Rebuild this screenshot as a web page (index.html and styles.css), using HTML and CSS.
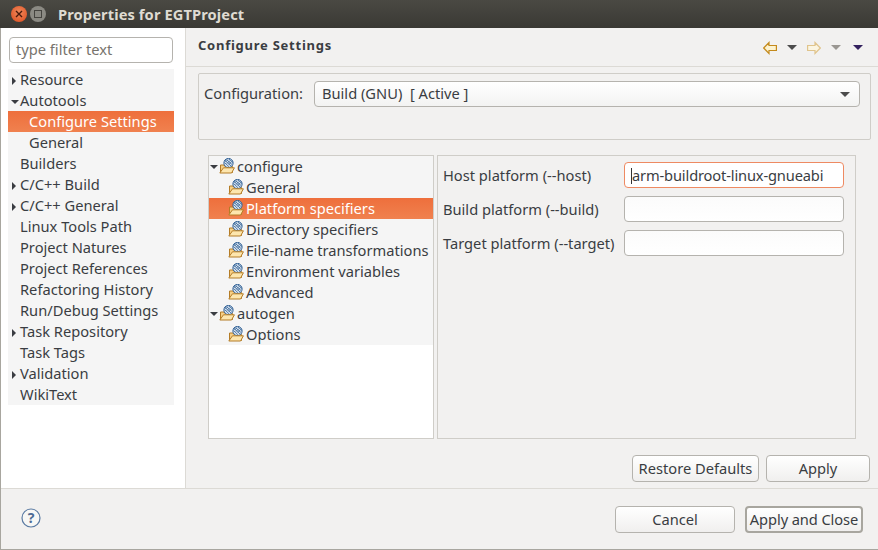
FILE: index.html
```html
<!DOCTYPE html>
<html lang="en">
<head>
    <meta charset="UTF-8">
    <title>Properties for EGTProject</title>
    <link rel="stylesheet" href="styles.css">
</head>
<body>
    <svg class="defs" width="0" height="0">
        <symbol id="folder" viewBox="0 0 18 18">
            <path d="M1.5 14.5 L1.5 7 L5 7 L6 8.5 L13.5 8.5 L13.5 14.5 Z" fill="#f6cf86" stroke="#b47c26"/>
            <circle cx="9.5" cy="5" r="4.6" fill="#dfe8f2" stroke="#2f5f94"/>
            <path d="M6 2.5 L12 8 M7.5 1.5 L13 6.5 M5.5 4.5 L10 8.8 M10 1 L14 4.5 M7 1 L5.5 3 M9 1.5 L6.5 4 M11 2.5 L8 5.5 M12.5 3.5 L10 6.5" stroke="#2f5f94" stroke-width="0.8"/>
            <path d="M0.8 15 L4.5 9.8 L15.4 9.8 L12.6 15 Z" fill="#fde6ae" stroke="#b47c26" stroke-linejoin="round"/>
        </symbol>
    </svg>
    <div class="window">
        <div class="titlebar">
            <span class="win-btn close"><svg width="8" height="8" viewBox="0 0 8 8"><path d="M1 1 L7 7 M7 1 L1 7" stroke="#4a1a0c" stroke-width="1.4"/></svg></span>
            <span class="win-btn maxi"><span class="maxi-box"></span></span>
            <span class="title">Properties for EGTProject</span>
        </div>

        <div class="body">
            <div class="sidebar">
                <div class="filter">type filter text</div>
                <ul class="nav-tree">
                    <li><i class="tw closed"></i>Resource</li>
                    <li><i class="tw open"></i>Autotools</li>
                    <li class="sub selected">Configure Settings</li>
                    <li class="sub">General</li>
                    <li><i class="tw"></i>Builders</li>
                    <li><i class="tw closed"></i>C/C++ Build</li>
                    <li><i class="tw closed"></i>C/C++ General</li>
                    <li><i class="tw"></i>Linux Tools Path</li>
                    <li><i class="tw"></i>Project Natures</li>
                    <li><i class="tw"></i>Project References</li>
                    <li><i class="tw"></i>Refactoring History</li>
                    <li><i class="tw"></i>Run/Debug Settings</li>
                    <li><i class="tw closed"></i>Task Repository</li>
                    <li><i class="tw"></i>Task Tags</li>
                    <li><i class="tw closed"></i>Validation</li>
                    <li><i class="tw"></i>WikiText</li>
                </ul>
            </div>

            <div class="page">
                <div class="page-head">
                    <h1>Configure Settings</h1>
                    <div class="nav-arrows">
                        <svg width="14" height="14" viewBox="0 0 14 14"><path d="M0.7 7 L6 1.5 L6 4.5 L13.4 4.5 L13.4 9.5 L6 9.5 L6 12.5 Z" fill="#fdf3cf" stroke="#c48a1c" stroke-width="1.2"/></svg>
                        <i class="drop dark"></i>
                        <svg width="14" height="14" viewBox="0 0 14 14"><path d="M13.3 7 L8 1.5 L8 4.5 L0.6 4.5 L0.6 9.5 L8 9.5 L8 12.5 Z" fill="#fbf5e2" stroke="#e0c48c" stroke-width="1.2"/></svg>
                        <i class="drop grey"></i>
                        <i class="drop purple"></i>
                    </div>
                </div>

                <div class="config-group">
                    <span class="config-label">Configuration:</span>
                    <div class="combo">
                        <span>Build (GNU)&nbsp; [ Active ]</span>
                        <i class="drop dark"></i>
                    </div>
                </div>

                <div class="panes">
                    <ul class="tool-tree">
                        <li><i class="tw open"></i><svg class="ico"><use href="#folder"/></svg>configure</li>
                        <li class="child"><svg class="ico"><use href="#folder"/></svg>General</li>
                        <li class="child selected"><svg class="ico"><use href="#folder"/></svg>Platform specifiers</li>
                        <li class="child"><svg class="ico"><use href="#folder"/></svg>Directory specifiers</li>
                        <li class="child"><svg class="ico"><use href="#folder"/></svg>File-name transformations</li>
                        <li class="child"><svg class="ico"><use href="#folder"/></svg>Environment variables</li>
                        <li class="child"><svg class="ico"><use href="#folder"/></svg>Advanced</li>
                        <li><i class="tw open"></i><svg class="ico"><use href="#folder"/></svg>autogen</li>
                        <li class="child"><svg class="ico"><use href="#folder"/></svg>Options</li>
                    </ul>
                    <div class="form">
                        <label>Host platform (--host)</label>
                        <div class="field focused"><span class="caret"></span>arm-buildroot-linux-gnueabi</div>
                        <label>Build platform (--build)</label>
                        <div class="field"></div>
                        <label>Target platform (--target)</label>
                        <div class="field"></div>
                    </div>
                </div>

                <div class="page-buttons">
                    <button class="btn restore">Restore Defaults</button>
                    <button class="btn apply">Apply</button>
                </div>
            </div>
        </div>

        <div class="footer">
            <svg class="help" width="20" height="20" viewBox="0 0 20 20">
                <circle cx="10" cy="10" r="9" fill="#f7f7f5" stroke="#5b7ba3" stroke-width="1.2"/>
                <text x="10" y="15" text-anchor="middle" class="help-mark">?</text>
            </svg>
            <div class="footer-buttons">
                <button class="btn cancel">Cancel</button>
                <button class="btn default">Apply and Close</button>
            </div>
        </div>
    </div>
</body>
</html>
```

FILE: styles.css
```css
* {
    box-sizing: border-box;
}
html, body {
    margin: 0;
    padding: 0;
}
body {
    width: 878px;
    height: 550px;
    overflow: hidden;
    font-family: "Noto Sans", sans-serif;
    font-size: 14.67px;
    color: #3a3d42;
    background-color: #f2f1f0;
}
.defs {
    position: absolute;
}
ul {
    list-style: none;
    margin: 0;
    padding: 0;
}
.window {
    height: 550px;
    display: flex;
    flex-direction: column;
    border-left: 1px solid #a8a69f;
    border-bottom: 1px solid #a8a69f;
}

/* title bar */
.titlebar {
    height: 28px;
    margin-left: -1px;
    display: flex;
    align-items: center;
    padding-left: 11px;
    background: linear-gradient(#4a4943, #3a3934);
}
.win-btn {
    width: 16px;
    height: 16px;
    border-radius: 50%;
    display: flex;
    align-items: center;
    justify-content: center;
    margin-right: 3px;
}
.close {
    background: radial-gradient(circle at 50% 40%, #f08a5c, #dc4a1c);
}
.maxi {
    background: #8b8a83;
}
.maxi-box {
    width: 8px;
    height: 8px;
    border: 1px solid #45443f;
}
.title {
    margin-left: 9px;
    font-size: 14.67px;
    font-weight: bold;
    letter-spacing: 0.1px;
    color: #dfdbd2;
}

/* left side */
.body {
    flex: 1;
    display: flex;
    min-height: 0;
    border-bottom: 1px solid #dcdad5;
}
.sidebar {
    width: 185px;
    background: #fff;
    border-right: 1px solid #dcdad5;
    padding: 9px 11px 0 7px;
}
.filter {
    margin: 0 1px 0 1px;
    height: 26px;
    line-height: 22px;
    padding-left: 6px;
    border: 1px solid #b5b3ae;
    border-radius: 4px;
    color: #77736c;
}
.nav-tree {
    margin-top: 6px;
    background: #f5f5f5;
}
.nav-tree li {
    height: 21px;
    line-height: 21px;
    white-space: nowrap;
    padding-left: 3px;
}
.nav-tree li.sub {
    padding-left: 21px;
}
.selected {
    color: #fff;
    background: linear-gradient(#ee6f3c, #f0814f);
}
.tw {
    display: inline-block;
    width: 9px;
    height: 8px;
    vertical-align: 0;
}
.tw.closed {
    width: 0;
    height: 0;
    margin-right: 4px;
    margin-left: 1px;
    border-left: 4px solid #3a3d42;
    border-top: 4px solid transparent;
    border-bottom: 4px solid transparent;
}
.tw.open {
    width: 0;
    height: 0;
    margin-right: 1px;
    border-top: 4px solid #3a3d42;
    border-left: 4px solid transparent;
    border-right: 4px solid transparent;
    vertical-align: 2px;
}

/* page */
.page {
    flex: 1;
    display: flex;
    flex-direction: column;
    padding: 0 7px 0 12px;
}
.page-head {
    height: 39px;
    margin: 0 -7px 0 -12px;
    padding: 0 15px 0 12px;
    display: flex;
    align-items: center;
    justify-content: space-between;
    border-bottom: 1px solid #dcdad5;
}
h1 {
    margin: -4px 0 0;
    font-size: 13px;
    font-weight: bold;
    letter-spacing: 0.75px;
}
.nav-arrows {
    display: flex;
    align-items: center;
    gap: 10px;
    margin-top: 1px;
}
.drop {
    display: inline-block;
    width: 0;
    height: 0;
    border-top: 5px solid #4c4c4c;
    border-left: 5px solid transparent;
    border-right: 5px solid transparent;
}
.drop.grey {
    border-top-color: #9a9792;
}
.drop.purple {
    border-top-color: #33215e;
    margin-left: 2px;
}
.config-group {
    margin-top: 6px;
    height: 67px;
    border: 1px solid #cfcdc8;
    border-radius: 2px;
    padding: 7px 10px 0 5px;
    display: flex;
    align-items: flex-start;
}
.config-label {
    line-height: 24px;
    width: 110px;
    white-space: nowrap;
}
.combo {
    flex: 1;
    height: 26px;
    border: 1px solid #b5b3ae;
    border-radius: 4px;
    background: linear-gradient(#fff, #f3f3f2);
    display: flex;
    align-items: center;
    justify-content: space-between;
    padding: 0 9px 2px 7px;
}
.combo .drop {
    margin-top: 2px;
}
.panes {
    margin: 15px 15px 0 10px;
    height: 284px;
    display: flex;
    gap: 3px;
}
.tool-tree {
    width: 226px;
    border: 1px solid #cfcdc8;
    background: #fff;
}
.tool-tree li {
    height: 21px;
    line-height: 21px;
    display: flex;
    align-items: center;
    padding-left: 1px;
    background: #f5f5f5;
    white-space: nowrap;
}
.tool-tree li.child {
    padding-left: 19px;
}
.tool-tree li.selected {
    background: linear-gradient(#ee6f3c, #f0814f);
}
.ico {
    width: 18px;
    height: 18px;
    flex: none;
}
.form {
    flex: 1;
    border: 1px solid #cfcdc8;
    padding: 6px 11px 0 5px;
    display: grid;
    grid-template-columns: 181px 1fr;
    grid-auto-rows: 26px;
    row-gap: 8px;
    align-items: center;
}
label {
    white-space: nowrap;
}
.field {
    height: 26px;
    border: 1px solid #b5b3ae;
    border-radius: 4px;
    background: linear-gradient(#fbfbfb, #fff);
    padding-left: 6px;
    line-height: 24px;
    white-space: nowrap;
}
.field.focused {
    border-color: #ee8a62;
    background: #fff;
    letter-spacing: -0.15px;
}
.caret {
    display: inline-block;
    width: 1px;
    height: 16px;
    background: #333;
    vertical-align: -3px;
}
.page-buttons {
    margin-top: 16px;
    padding-right: 1px;
    display: flex;
    justify-content: flex-end;
    gap: 7px;
}
.btn {
    height: 27px;
    padding: 0 0 2px;
    font-family: inherit;
    font-size: 14.67px;
    color: #3a3d42;
    border: 1px solid #b5b3ae;
    border-radius: 4px;
    background: linear-gradient(#fff, #f0efee);
}
.restore {
    width: 127px;
}
.apply {
    width: 104px;
}
.footer {
    height: 60px;
    display: flex;
    align-items: flex-start;
    justify-content: space-between;
    padding: 17px 15px 0 20px;
}
.help {
    margin-top: 2px;
}
.help-mark {
    font-size: 14px;
    font-weight: bold;
    fill: #4d6b94;
}
.footer-buttons {
    display: flex;
    gap: 10px;
}
.cancel {
    width: 120px;
}
.default {
    width: 118px;
    letter-spacing: -0.1px;
    border: 2px solid #a8a69f;
}
```
